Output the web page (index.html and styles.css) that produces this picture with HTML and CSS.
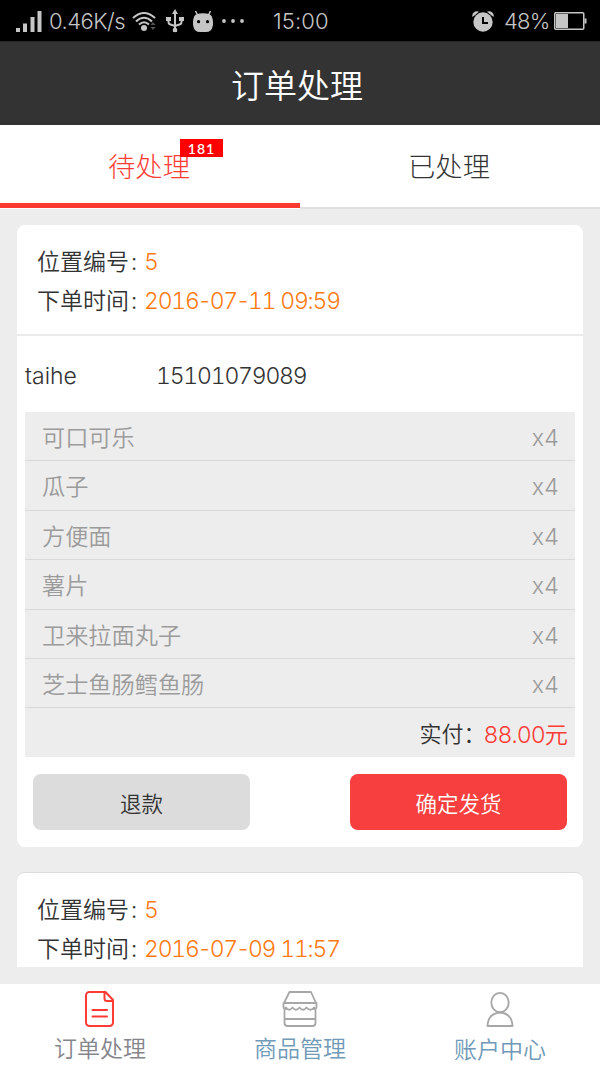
FILE: index.html
```html
<!DOCTYPE html>
<html lang="zh-CN">
<head>
<meta charset="utf-8">
<title>订单处理</title>
<link rel="stylesheet" href="styles.css">
</head>
<body>
<div class="app">
  <div class="status">
    <svg class="signal" width="26" height="22" viewBox="0 0 26 22"><path d="M0 18h4v4H0zM7 13.500h4V22H7zM14.500 7h4v15h-4zM21.500 1h4v21h-4z"/></svg>
    <span class="speed">0.46K/s</span>
    <svg class="wifi" width="25" height="21" viewBox="0 0 25 21"><g fill="none" stroke="#c6c6c6" stroke-width="2"><path d="M1 7Q12-3 23 7M4 10.500Q12 3 20 10.500M7 13.500Q12 9 17 13.500"/></g><circle cx="12" cy="17" r="3"/><path d="M18.500 14l2.500-3 2.500 3zM18.500 16l2.500 3 2.500-3z" fill="#555"/></svg>
    <svg class="usb" width="18" height="24" viewBox="0 0 18 24"><path d="M9 0l3 5H6zM7 20h4v3H7zM0 8h5v4H0zM13 8h5v4h-5z"/><circle cx="9" cy="21" r="2.300"/><path d="M9 4v16M2.500 11v2q0 2 2 2.500L9 17l4.500-1.500q2-.5 2-2.500v-2" fill="none" stroke="#c6c6c6" stroke-width="2"/></svg>
    <svg class="droid" width="20" height="21" viewBox="0 0 20 21"><path d="M2.500 0l2 4M17.500 0l-2 4" stroke="#c6c6c6" stroke-width="1.500"/><path fill-rule="evenodd" d="M3 3.500Q10 1 17 3.500q2 1 2.500 4 1 5 .2 7.500-1 6-6.700 6H7q-5.700 0-6.700-6-.8-2.500.2-7.500.5-3 2.500-4zM5.500 9a1.600 1.600 0 1 0 .1 3.200A1.600 1.600 0 1 0 5.500 9zm9 0a1.600 1.600 0 1 0 .1 3.200A1.600 1.600 0 1 0 14.500 9z"/></svg>
    <svg class="dots" width="22" height="4" viewBox="0 0 22 4"><circle cx="2" cy="2" r="1.900"/><circle cx="11" cy="2" r="1.900"/><circle cx="20" cy="2" r="1.900"/></svg>
    <span class="clock">15:00</span>
    <svg class="alarm" width="22" height="21" viewBox="0 0 22 21"><path d="M.5 6A4.500 4.500 0 0 1 7 .8zM21.500 6A4.500 4.500 0 0 0 15 .8z"/><circle cx="11" cy="11" r="9.700"/><path d="M11 6v6h5" fill="none" stroke="#000" stroke-width="2"/></svg>
    <span class="percent">48%</span>
    <svg class="battery" width="33" height="18" viewBox="0 0 33 18"><rect x=".75" y=".75" width="29" height="16.500" rx="1" fill="none" stroke="#c6c6c6" stroke-width="1.500"/><path d="M2 2h12v14H2zM30.500 6.500h2v5h-2z"/></svg>
  </div>
  <header class="title">订单处理</header>
  <nav class="tabs">
    <div class="tab active"><span class="tab-label">待处理<b class="badge">181</b></span></div>
    <div class="tab"><span class="tab-label">已处理</span></div>
  </nav>
  <main class="orders">
    <section class="card">
      <div class="meta">
        <p class="line"><span>位置编号</span><span class="colon">:</span><span class="value">5</span></p>
        <p class="line"><span>下单时间</span><span class="colon">:</span><span class="value">2016<span class="dash">-</span>07<span class="dash">-</span>11 09:59</span></p>
      </div>
      <div class="buyer"><span class="name">taihe</span><span class="phone">15101079089</span></div>
      <div class="goods">
        <div class="item"><span>可口可乐</span><span class="qty">x4</span></div>
        <div class="item"><span>瓜子</span><span class="qty">x4</span></div>
        <div class="item"><span>方便面</span><span class="qty">x4</span></div>
        <div class="item"><span>薯片</span><span class="qty">x4</span></div>
        <div class="item"><span>卫来拉面丸子</span><span class="qty">x4</span></div>
        <div class="item"><span>芝士鱼肠鳕鱼肠</span><span class="qty">x4</span></div>
        <div class="total"><span class="paid">实付：</span><span class="price">88.00<span class="yuan">元</span></span></div>
      </div>
      <div class="actions"><button class="btn refund">退款</button><button class="btn ship">确定发货</button></div>
    </section>
    <section class="card next">
      <div class="meta">
        <p class="line"><span>位置编号</span><span class="colon">:</span><span class="value">5</span></p>
        <p class="line"><span>下单时间</span><span class="colon">:</span><span class="value">2016<span class="dash">-</span>07<span class="dash">-</span>09 11:57</span></p>
      </div>
    </section>
  </main>
  <footer class="bottom">
    <div class="link current">
      <svg width="36" height="38" viewBox="0 0 36 38"><path d="M23.500 2H7.500a3.500 3.500 0 0 0-3.500 3.500v27a3.500 3.500 0 0 0 3.500 3.500h20a3.500 3.500 0 0 0 3.500-3.500V10zM22.500 2v6.500q0 2.500 2.500 2.500h6M10.500 20h14.500M10.500 26.500h14.500"/></svg>
      <span>订单处理</span>
    </div>
    <div class="link">
      <svg width="36" height="38" viewBox="0 0 36 38"><path d="M7.500 2h21.500l5 11H2zM1.500 13v4q0 2 2.500 2M34.500 13v4q0 2-2.500 2M2.500 19v14q0 3 3 3h25q3 0 3-3V19M3 29h30M4 17.500q3 4.500 6.500 0 3.500 4.500 7 0 3.500 4.500 7 0 4 4.500 7.500 0"/></svg>
      <span>商品管理</span>
    </div>
    <div class="link user">
      <svg width="36" height="38" viewBox="0 0 36 38"><ellipse cx="18" cy="11.500" rx="8.700" ry="9.700"/><path d="M5.500 35q.5-12.500 12.500-13.500 12 1 12.500 13.500z"/></svg>
      <span>账户中心</span>
    </div>
  </footer>
</div>
</body>
</html>
```
FILE: styles.css
```css
* { box-sizing: border-box; }
body { margin: 0; font-family: Inter, "Noto Sans CJK SC DemiLight", "Noto Sans CJK SC", sans-serif; font-weight: 350; color: #333; font-variant-numeric: tabular-nums; }
.app { width: 600px; height: 1067px; display: flex; flex-direction: column; background: #ededed; overflow: hidden; }
.status { height: 41px; flex: none; background: #000; color: #c6c6c6; display: flex; align-items: center; padding: 1px 0 0 16px; font-size: 22px; line-height: 41px; font-weight: 300; white-space: nowrap; font-variant-numeric: normal; }
.status svg { flex: none; fill: #c6c6c6; }
.speed { margin-left: 7px; width: 83px; letter-spacing: -0.5px; }
.usb { margin-left: 9px; }
.droid { margin-left: 9px; }
.dots { margin-left: 9px; }
.clock { margin-left: 29px; width: 199px; letter-spacing: 0.1px; }
.percent { margin-left: 10px; width: 50px; letter-spacing: -0.8px; }
.title { height: 84px; flex: none; background: #333; border-top: 1px solid #282828; color: #fff; text-align: center; font-size: 33px; line-height: 89px; padding-right: 6px; }
.tabs { height: 84px; flex: none; display: flex; background: #fff; }
.tab { flex: 1; display: flex; justify-content: center; border-bottom: 2px solid #e0e0e0; font-size: 27.3px; line-height: 86px; padding-right: 2px; font-weight: 300; font-family: Inter, "Noto Sans CJK SC", sans-serif; }
.tab.active { color: #fe3b35; border-bottom: 5px solid #fe3b31; height: 83px; }
.tab-label { position: relative; }
.badge { position: absolute; left: 72px; top: 14px; width: 43px; height: 18px; background: #f00; color: #fff; font: 600 14px/20px Lato, sans-serif; letter-spacing: 1px; text-align: center; }
.orders { flex: none; height: 758px; padding: 16px 17px 0; overflow: hidden; }
.card { background: #fff; border-radius: 8px; height: 622px; }
.meta { height: 111px; padding: 17px 20px 0; border-bottom: 2px solid #ebebeb; }
.line { margin: 0; height: 38.5px; display: flex; font-size: 23px; line-height: 41px; }
.colon { width: 15px; padding-left: 2px; }
.value { color: #ff7a10; letter-spacing: -1.2px; }
.dash { margin: 0 -1.4px; }
.buyer { height: 76px; padding-left: 8px; display: flex; font-size: 23px; line-height: 81px; }
.name { width: 131px; }
.phone { letter-spacing: -1.2px; }
.goods { height: 345px; margin: 0 8px; background: #ededed; display: flex; flex-direction: column; font-size: 23.2px; }
.item { height: 49.4px; flex: none; border-bottom: 1px solid #d9d9d9; padding: 0 16px 0 17px; display: flex; justify-content: space-between; color: #9b9b9b; line-height: 52px; }
.total { display: flex; justify-content: flex-end; padding-right: 8px; line-height: 54px; }
.paid { font-size: 22px; line-height: 52px; }
.price { color: #fe3b35; letter-spacing: -1px; margin-left: -2px; }
.actions { display: flex; justify-content: space-between; padding: 17px 16px 0; }
.btn { width: 217px; height: 56px; padding: 0; border: 0; border-radius: 8px; font: inherit; font-size: 21.5px; color: #333; background: #dcdcdc; }
.ship { background: #f63f3e; color: #fff; }
.next { margin-top: 25px; height: 95px; border-radius: 8px 8px 0 0; border-top: 1px solid #dcdcdc; }
.next .meta { height: 94px; border: 0; }
.bottom { height: 84px; margin-top: 17px; flex: none; background: #fff; display: flex; }
.link { flex: 1; display: flex; flex-direction: column; align-items: center; padding-top: 6px; font-size: 23px; line-height: 42px; color: #7199b8; }
.link svg { flex: none; fill: none; stroke: #a7a7a7; stroke-width: 1.800; stroke-linejoin: round; stroke-linecap: round; }
.current { color: #85858c; }
.current svg { stroke: #fe3b35; stroke-width: 2; }
.user { padding-top: 7px; }
```
